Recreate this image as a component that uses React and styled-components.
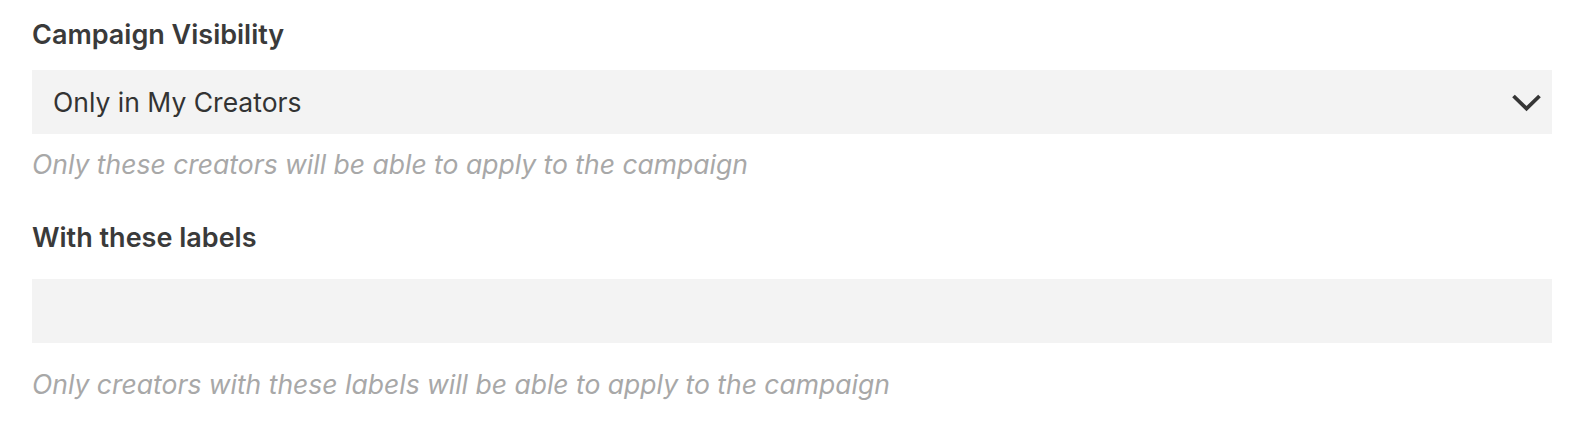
import React from 'react';
import styled, {createGlobalStyle} from "styled-components";

const GlobalStyle = createGlobalStyle`
    body {
        margin: 0;
        background: #ffffff;
        font-family: Inter, "Noto Sans", sans-serif;
    }
`

const ChevronDown = () => (
    <svg width="31" height="19" viewBox="0 0 31 19" fill="none">
        <path d="M2.5 3 L15.5 15.5 L28.5 3" stroke="#353535" strokeWidth="3.8" />
    </svg>
);

const App = () => {
    return (
        <Form>
            <GlobalStyle/>
            <Field>
                <Label>Campaign Visibility</Label>
                <SelectBox>
                    <SelectValue>Only in My Creators</SelectValue>
                    <ChevronDown/>
                </SelectBox>
                <Help>Only these creators will be able to apply to the campaign</Help>
            </Field>
            <Field>
                <Label>With these labels</Label>
                <InputBox/>
                <Help spaced>Only creators with these labels will be able to apply to the campaign</Help>
            </Field>
        </Form>
    );
};

const Form = styled.div`
    padding: 19px 30px 0 32px;
    display: flex;
    flex-direction: column;
    gap: 42px;
`

const Field = styled.div`
    display: flex;
    flex-direction: column;
`

const Label = styled.div`
    font-size: 27px;
    font-weight: 600;
    color: #3a3a3a;
    line-height: 32px;
`

const SelectBox = styled.div`
    margin-top: 19px;
    height: 64px;
    background: #f3f3f3;
    display: flex;
    align-items: center;
    justify-content: space-between;
    padding: 0 10px 0 21px;
    box-sizing: border-box;
`

const SelectValue = styled.span`
    font-size: 26.5px;
    color: #333333;
`

const InputBox = styled.div`
    margin-top: 25px;
    height: 64px;
    background: #f3f3f3;
`

const Help = styled.div`
    margin-top: ${props => props.spaced ? '25px' : '14px'};
    font-size: 26.5px;
    font-style: italic;
    color: #a8a8a8;
    line-height: 32px;
`

export default App;
